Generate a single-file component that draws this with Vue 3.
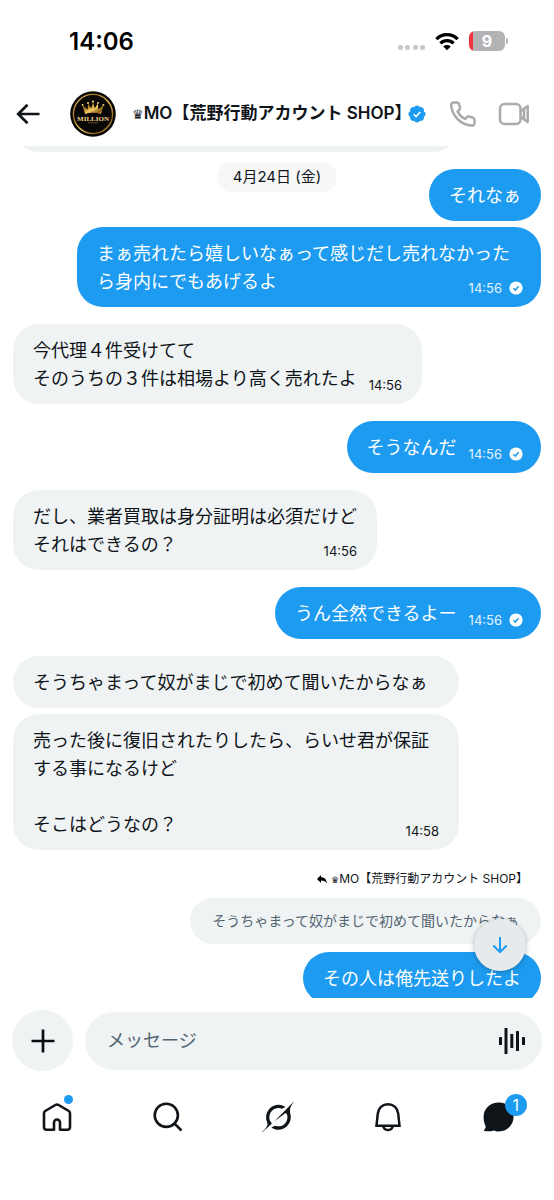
<script setup>
import { ref } from 'vue'

const draft = ref('')

const groups = [
  {
    side: 'out',
    items: [
      { lines: ['それなぁ'] },
      { lines: ['まぁ売れたら嬉しいなぁって感じだし売れなかったら身内にでもあげるよ'], time: '14:56' },
    ],
  },
  {
    side: 'in',
    items: [{ lines: ['今代理\uFF14件受けてて', 'そのうちの\uFF13件は相場より高く売れたよ'], time: '14:56' }],
  },
  { side: 'out', items: [{ lines: ['そうなんだ'], time: '14:56' }] },
  {
    side: 'in',
    items: [{ lines: ['だし、業者買取は身分証明は必須だけど', 'それはできるの\uFF1F'], time: '14:56' }],
  },
  { side: 'out', items: [{ lines: ['うん全然できるよー'], time: '14:56' }] },
  {
    side: 'in',
    items: [
      { lines: ['そうちゃまって奴がまじで初めて聞いたからなぁ'] },
      {
        lines: ['売った後に復旧されたりしたら、らいせ君が保証する事になるけど', '', 'そこはどうなの\uFF1F'],
        time: '14:58',
      },
    ],
  },
]
</script>

<template>
  <div class="app">
    <div class="status">
      <span class="clock">14:06</span>
      <div class="status-icons">
        <svg width="29" height="19" viewBox="0 0 29 19" fill="#c9c9cb" aria-hidden="true">
          <rect x="1" y="13" width="5" height="5" rx="2" />
          <rect x="8" y="13" width="5" height="5" rx="2" />
          <rect x="16" y="13" width="5" height="5" rx="2" />
          <rect x="23" y="13" width="5" height="5" rx="2" />
        </svg>
        <svg class="wifi" width="24" height="19" viewBox="0 0 24 19" aria-hidden="true">
          <g fill="none" stroke="#000" stroke-width="3.3">
            <path d="M1.4 7.2C7.2 1.1 16.8 1.1 22.6 7.2" />
            <path d="M5.4 11.4c3.6-3.7 9.6-3.7 13.2 0" />
          </g>
          <path d="M8.2 14.4c2.2-2 5.4-2 7.6 0L12 18.2z" />
        </svg>
        <div class="battery"><span>9</span></div>
      </div>
    </div>

    <header class="header">
      <button class="icon-btn back" aria-label="戻る">
        <svg width="24" height="22" viewBox="0 0 24 22" fill="none" stroke="#0f1419" stroke-width="2.7">
          <path d="M23.5 11H2.5M11.5 1.7 2.2 11l9.3 9.3" />
        </svg>
      </button>
      <svg class="avatar" width="46" height="46" viewBox="0 0 46 46" aria-hidden="true">
        <defs>
          <linearGradient id="gold" x1="0" y1="0" x2="1" y2="1">
            <stop offset="0" stop-color="#f6dc7a" />
            <stop offset=".3" stop-color="#9a6a1c" />
            <stop offset=".55" stop-color="#f3cf62" />
            <stop offset=".8" stop-color="#8f5f16" />
            <stop offset="1" stop-color="#f5da79" />
          </linearGradient>
        </defs>
        <circle cx="23" cy="23" r="22.8" fill="#090606" />
        <circle cx="23" cy="23" r="19.6" fill="none" stroke="url(#gold)" stroke-width="1.4" />
        <path d="M15 23 12.6 14.5l5 4 .6-6.200 3 5.200L23 10.600l1.800 6.900 3-5.200.6 6.200 5-4L31 23c-5-1.600-11-1.600-16 0z" fill="url(#gold)" />
        <g fill="#f3d271">
          <circle cx="12.6" cy="14" r="1" /><circle cx="18" cy="12" r="1" /><circle cx="23" cy="10.6" r="1.1" />
          <circle cx="28" cy="12" r="1" /><circle cx="33.4" cy="14" r="1" />
        </g>
        <text x="23" y="30" text-anchor="middle" class="avatar-text">MILLION</text>
        <path d="M18 31.8h10" stroke="#8b6a2a" stroke-width=".7" />
      </svg>
      <h1 class="name">
        <span class="crown">♛</span>MO【荒野行動アカウント SHOP<span class="half">】</span>
      </h1>
      <svg class="verified" width="18" height="18" viewBox="0 0 22 22" aria-label="認証済み">
        <path fill="#1d9bf0" d="M20.4 11c0-.65-.2-1.28-.55-1.82-.36-.54-.86-.97-1.45-1.24.22-.6.26-1.27.14-1.9-.13-.63-.43-1.22-.88-1.69-.47-.44-1.05-.75-1.69-.88-.63-.13-1.29-.08-1.9.14-.27-.59-.7-1.09-1.24-1.44C12.29 1.81 11.66 1.62 11 1.6c-.65.02-1.28.21-1.82.57s-.97.86-1.24 1.44c-.6-.22-1.27-.27-1.9-.14-.63.12-1.22.43-1.69.88-.44.47-.75 1.05-.88 1.69-.12.63-.07 1.29.15 1.9-.6.27-1.1.7-1.46 1.24-.35.54-.55 1.17-.56 1.82.01.65.21 1.28.56 1.82.36.54.86.97 1.46 1.24-.22.6-.27 1.27-.15 1.9.13.64.44 1.22.88 1.69.47.44 1.06.75 1.69.88.63.12 1.29.07 1.9-.15.27.59.7 1.09 1.24 1.45.54.35 1.17.55 1.82.57.66-.02 1.29-.21 1.83-.57.54-.35.97-.86 1.24-1.44.6.24 1.27.28 1.9.15.63-.13 1.22-.44 1.69-.9.45-.46.75-1.05.88-1.68.13-.63.08-1.3-.14-1.9.59-.27 1.09-.7 1.45-1.24.35-.54.54-1.17.55-1.82z" transform="translate(-1.2 -1.2) scale(1.11)" />
        <path fill="none" stroke="#fff" stroke-width="1.9" d="m7 11.3 2.9 2.9 5-5.7" />
      </svg>
      <button class="icon-btn call" aria-label="音声通話">
        <svg width="28" height="28" viewBox="0 0 28 28" fill="none" stroke="#a9abad" stroke-width="2.5" stroke-linejoin="round">
          <path d="M4.6 2.5h3.3c1 0 1.8.6 2.1 1.5l1 3.5c.2.7 0 1.5-.5 2L8.6 11.6c1.6 3.2 4.2 5.8 7.5 7.4l2.2-2.1c.5-.5 1.3-.7 2-.4l3.7 1.2c.9.3 1.5 1.1 1.5 2.1v3.3c0 1.5-1.2 2.7-2.7 2.5C11.8 24.9 3.1 16.2 2.1 5.2 2 3.7 3.1 2.500 4.600 2.500z" />
        </svg>
      </button>
      <button class="icon-btn" aria-label="ビデオ通話">
        <svg width="32" height="24" viewBox="0 0 32 24" fill="none" stroke="#a9abad" stroke-width="2.5" stroke-linejoin="round">
          <rect x="2" y="2" width="20.5" height="20" rx="4.5" />
          <path d="M22.5 9.3 29.700 4v16l-7.200-5.300M26 7v10" />
        </svg>
      </button>
    </header>

    <main class="feed">
      <div class="date">4月24日 (金)</div>
      <div class="bubble earlier"></div>

      <section v-for="(group, g) in groups" :key="g" class="group" :class="group.side">
        <div v-for="(m, i) in group.items" :key="i" class="bubble">
          <p v-for="(line, n) in m.lines" :key="n" class="line">
            <span>{{ line }}</span>
            <span v-if="m.time && n === m.lines.length - 1" class="meta">
              <time>{{ m.time }}</time>
              <svg v-if="group.side === 'out'" width="14" height="14" viewBox="0 0 14 14" aria-label="送信済み">
                <circle cx="7" cy="7" r="6.6" fill="#fff" />
                <path d="m4.4 7.2 1.9 1.9 3.3-3.9" fill="none" stroke="#1d9bf0" stroke-width="1.5" />
              </svg>
            </span>
          </p>
        </div>
      </section>

      <section class="group out reply">
        <div class="reply-to">
          <svg width="10" height="9" viewBox="0 0 10 9" aria-hidden="true">
            <path d="M4 0v2.2c3.5 0 5.5 2 6 6.3C8.5 6.3 7 5.600 4 5.600V8L0 4z" />
          </svg>
          <span><span class="crown">♛</span>MO【荒野行動アカウント SHOP<span class="half">】</span></span>
        </div>
        <blockquote class="quote">そうちゃまって奴がまじで初めて聞いたからなぁ</blockquote>
        <div class="bubble"><p class="line">その人は俺先送りしたよ</p></div>
      </section>

      <button class="jump" aria-label="最新のメッセージへ">
        <svg width="16" height="18" viewBox="0 0 16 18" fill="none" stroke="#1d9bf0" stroke-width="2">
          <path d="M8 1v15M1.3 9.5 8 16.2l6.7-6.7" />
        </svg>
      </button>
    </main>

    <form class="composer" @submit.prevent>
      <button type="button" class="plus" aria-label="追加">
        <svg width="24" height="24" viewBox="0 0 24 24" stroke="#0b0d10" stroke-width="2.7"><path d="M12 .5v23M.5 12h23" /></svg>
      </button>
      <div class="field">
        <input v-model="draft" type="text" placeholder="メッセージ" aria-label="メッセージ" />
        <button type="button" class="icon-btn" aria-label="音声メッセージ">
          <svg width="26" height="26" viewBox="0 0 26 26" fill="#0f1419">
            <rect x="0" y="9" width="3" height="8" rx=".5" />
            <rect x="5.5" y="0" width="3" height="26" rx=".5" />
            <rect x="11.3" y="6" width="3" height="14" rx=".5" />
            <rect x="17" y="3" width="3" height="20" rx=".5" />
            <rect x="23" y="9" width="3" height="8" rx=".5" />
          </svg>
        </button>
      </div>
    </form>

    <nav class="tabs">
      <a href="#home" aria-label="ホーム">
        <span class="tab-icon">
          <svg width="32" height="32" viewBox="0 0 32 32" fill="none" stroke="#0f1419" stroke-width="2.6" stroke-linejoin="round">
            <path d="M13 28.7v-7.2a3 3 0 0 1 6 0v7.2h7.2c1.7 0 2.8-1.1 2.8-2.8V12.2c0-1-.4-1.7-1.2-2.2l-10.2-6c-1-.6-2.2-.6-3.2 0L4.200 10c-.8.5-1.200 1.200-1.200 2.200v13.700c0 1.700 1.100 2.800 2.800 2.800z" />
          </svg>
          <span class="dot"></span>
        </span>
      </a>
      <a href="#search" aria-label="検索">
        <svg width="32" height="32" viewBox="0 0 32 32" fill="none" stroke="#0f1419" stroke-width="2.6">
          <circle cx="14.3" cy="14.3" r="11.6" /><path d="m22.3 22.3 7.2 7.2" />
        </svg>
      </a>
      <a href="#grok" aria-label="Grok">
        <svg width="34" height="32" viewBox="0 0 33 32" fill="#0f1419">
          <path d="M12.745 20.54l10.97-8.19c.539-.4 1.307-.244 1.564.38 1.349 3.288.746 7.241-1.938 9.955-2.683 2.714-6.417 3.31-9.83 1.954l-3.728 1.745c5.347 3.697 11.84 2.782 15.898-1.324 3.219-3.255 4.216-7.692 3.284-11.693l.008.009c-1.351-5.878.332-8.227 3.782-13.031L33 0l-4.54 4.59v-.014L12.743 20.544m-2.263 1.987c-3.837-3.707-3.175-9.446.1-12.755 2.42-2.449 6.388-3.448 9.852-1.979l3.72-1.737c-.67-.49-1.53-1.017-2.515-1.387-4.455-1.854-9.789-.931-13.41 2.728-3.483 3.523-4.579 8.94-2.697 13.561 1.405 3.454-.899 5.898-3.22 8.364C1.49 30.2.666 31.074 0 32l10.478-9.466" />
        </svg>
      </a>
      <a href="#notifications" aria-label="通知">
        <svg width="32" height="32" viewBox="0 0 32 32" fill="none" stroke="#0f1419" stroke-width="2.5">
          <path d="M4.500 24.700 5.800 12.500C6.300 7 10.400 3.300 16 3.300S25.700 7 26.200 12.500l1.300 12.200zM11 25c.7 2.500 2.600 4 5 4s4.300-1.500 5-4" />
        </svg>
      </a>
      <a href="#messages" aria-label="メッセージ">
        <span class="tab-icon">
          <svg width="32" height="32" viewBox="0 0 32 32" fill="#0f1419">
            <path d="M15.8 1.6c8.3 0 14.8 6 14.8 14.1 0 8.3-6.5 14.7-14.8 14.7-2 0-3.7-.5-5.1-1-2.5 1-6 1.3-9.200.5-.6-.2-.7-.8-.3-1.200 1-1 1.600-2.200 1.500-3.300C1.300 22.500.6 19.500.6 16 .6 7.600 7.400 1.600 15.800 1.600z" />
          </svg>
          <span class="badge">1</span>
        </span>
      </a>
    </nav>
  </div>
</template>

<style>
body {
  margin: 0;
  background: #fff;
}
</style>

<style scoped>
.app {
  position: relative;
  display: flex;
  flex-direction: column;
  height: 100vh;
  overflow: hidden;
  color: #0f1419;
  font-family: Inter, "Noto Sans CJK JP", sans-serif;
  background: #fff;
}

button {
  padding: 0;
  border: 0;
  background: none;
  cursor: pointer;
}

svg {
  display: block;
  flex: none;
}

.status {
  display: flex;
  align-items: center;
  justify-content: space-between;
  height: 82px;
  padding: 0 46px 0 69px;
  box-sizing: border-box;
  color: #000;
}

.clock {
  font-size: 24px;
  font-weight: 600;
}

.status-icons {
  display: flex;
  align-items: center;
}

.wifi {
  margin: 0 10px 0 9px;
}

.battery {
  position: relative;
  display: grid;
  place-items: center;
  width: 36px;
  height: 20px;
  margin-right: 3px;
  border-radius: 6px;
  color: #fff;
  font-size: 16px;
  font-weight: 700;
  line-height: 20px;
  background: linear-gradient(90deg, #f5333f 4px, #b3b3b5 4px);
}

.battery::after {
  content: "";
  position: absolute;
  top: 7px;
  right: -3px;
  width: 2px;
  height: 6px;
  border-radius: 0 2px 2px 0;
  background: #b3b3b5;
}

.header {
  display: flex;
  align-items: center;
  height: 64px;
  padding: 0 24px 0 16px;
}

.back {
  margin-right: 30px;
}

.avatar {
  margin-right: 16px;
}

.avatar-text {
  fill: #f3d68a;
  font-family: "Liberation Serif", serif;
  font-size: 7px;
  font-weight: 700;
}

.name {
  margin: 0;
  font-size: 17px;
  font-weight: 600;
  line-height: 24px;
  white-space: nowrap;
}

.crown {
  font-family: "DejaVu Sans", sans-serif;
  font-size: 13px;
  font-weight: 400;
}

.half {
  font-feature-settings: "halt";
}

.verified {
  margin: 0 auto 0 5px;
}

.call {
  margin-right: 21px;
}

.feed {
  position: relative;
  display: flex;
  flex: 1;
  flex-direction: column;
  gap: 17px;
  min-height: 0;
  padding: 0 13px;
  overflow: hidden;
}

.date {
  position: absolute;
  top: 16px;
  left: 50%;
  padding: 0 16px;
  border-radius: 15px;
  font-size: 15px;
  line-height: 30px;
  white-space: nowrap;
  background: #f7f7f7;
  transform: translateX(-50%);
}

.group {
  display: flex;
  flex: none;
  flex-direction: column;
  gap: 6px;
}

.in {
  align-self: flex-start;
  max-width: calc(100% - 82px);
}

.out {
  align-self: flex-end;
  align-items: flex-end;
  max-width: calc(100% - 64px);
}

.bubble {
  padding: 13px 20px 11px;
  border-radius: 26px;
  font-size: 18px;
  line-height: 28px;
  background: #eff3f4;
}

.out .bubble {
  color: #fff;
  background: #1d9bf0;
}

.line {
  display: flow-root;
  min-height: 28px;
  margin: 0;
}

.earlier {
  flex: none;
  height: 28px;
  margin: -46px 82px 0 0;
}

.meta {
  display: flex;
  float: right;
  gap: 7px;
  align-items: center;
  margin: 12px 0 0 12px;
  font-size: 13px;
  line-height: 16px;
}

.out .meta {
  margin-right: -2px;
  color: #e4f3fe;
}

.reply-to {
  display: flex;
  gap: 4px;
  align-items: center;
  padding-right: 19px;
  font-size: 12px;
  line-height: 24px;
}

.reply-to .crown {
  font-size: 9px;
}

.quote {
  margin: 0 0 2px;
  padding: 0 22px;
  border-radius: 23px;
  color: #536471;
  font-size: 14px;
  line-height: 46px;
  background: #eff3f4;
}

.jump {
  position: absolute;
  right: 28px;
  bottom: 27px;
  display: grid;
  place-items: center;
  width: 52px;
  height: 52px;
  border-radius: 50%;
  background: #e6eaec;
  box-shadow: 0 1px 5px rgb(0 0 0 / 28%);
}

.composer {
  display: flex;
  gap: 12px;
  align-items: center;
  padding: 12px 12px 0;
}

.plus {
  display: grid;
  flex: none;
  place-items: center;
  width: 61px;
  height: 61px;
  border-radius: 50%;
  background: #eff3f4;
}

.field {
  display: flex;
  flex: 1;
  align-items: center;
  height: 58px;
  padding: 0 17px 0 22px;
  border-radius: 29px;
  background: #eff3f4;
}

.field input {
  flex: 1;
  min-width: 0;
  padding: 0;
  border: 0;
  outline: 0;
  color: #0f1419;
  font: inherit;
  font-size: 18px;
  background: none;
}

.field input::placeholder {
  color: #536471;
  opacity: 1;
}

.tabs {
  display: grid;
  grid-template-columns: repeat(5, 1fr);
  height: 129px;
  padding-left: 2px;
}

.tabs a {
  display: flex;
  justify-content: center;
  height: 32px;
  margin-top: 30px;
  color: inherit;
  text-decoration: none;
}

.tab-icon {
  position: relative;
}

.dot {
  position: absolute;
  top: -6px;
  right: 0;
  width: 9px;
  height: 9px;
  border-radius: 50%;
  background: #1d9bf0;
}

.badge {
  position: absolute;
  top: -7px;
  right: -12px;
  width: 22px;
  height: 22px;
  border-radius: 50%;
  color: #fff;
  font-size: 16px;
  line-height: 22px;
  text-align: center;
  background: #1d9bf0;
}
</style>
